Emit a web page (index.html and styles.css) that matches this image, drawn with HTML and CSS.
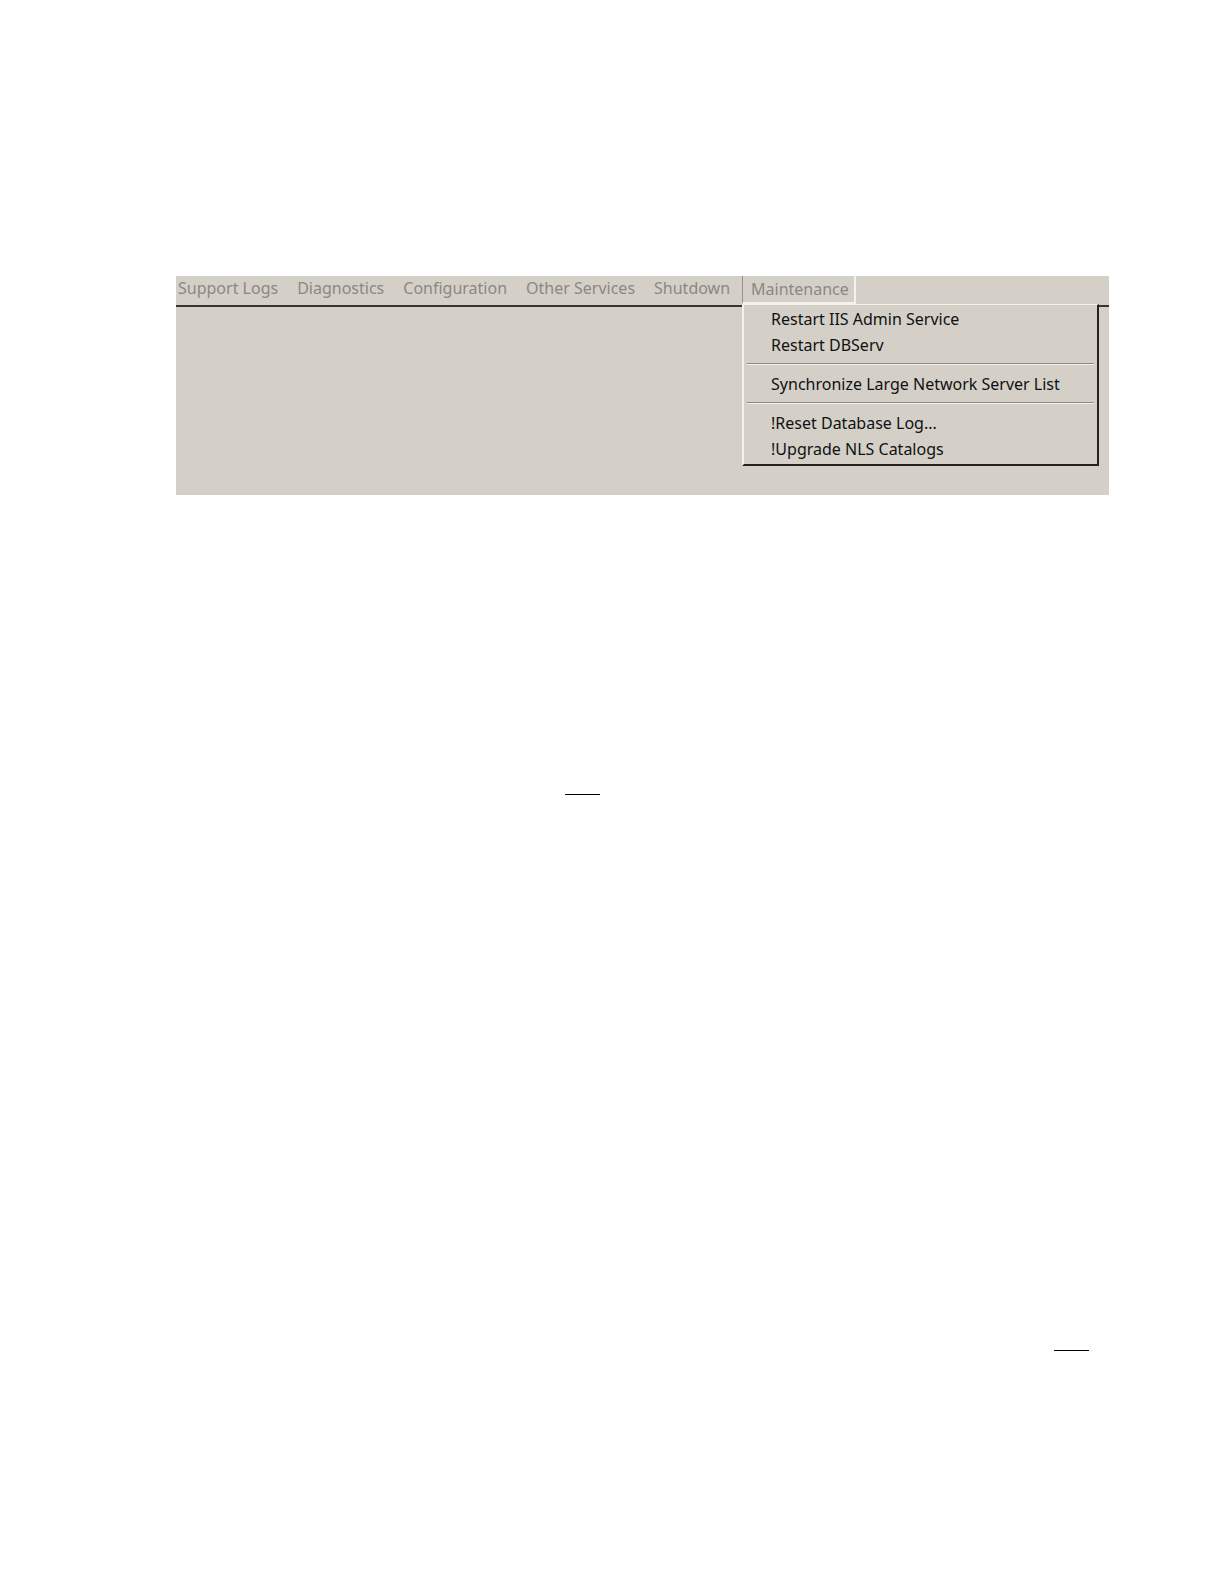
FILE: index.html
```html
<!DOCTYPE html>
<html lang="en">
<head>
    <meta charset="UTF-8">
    <meta name="viewport" content="width=device-width, initial-scale=1.0">
    <title>Maintenance Menu</title>
    <link rel="stylesheet" href="styles.css">
</head>
<body>
    <main class="page">
        <div class="window">
            <nav class="menubar">
                <button type="button">Support Logs</button>
                <button type="button">Diagnostics</button>
                <button type="button">Configuration</button>
                <button type="button">Other Services</button>
                <button type="button">Shutdown</button>
                <div class="menu-holder">
                    <button type="button" class="open" aria-expanded="true">Maintenance</button>
                    <div class="dropdown">
                        <button type="button">Restart IIS Admin Service</button>
                        <button type="button">Restart DBServ</button>
                        <hr>
                        <button type="button">Synchronize Large Network Server List</button>
                        <hr>
                        <button type="button">!Reset Database Log...</button>
                        <button type="button">!Upgrade NLS Catalogs</button>
                    </div>
                </div>
            </nav>
        </div>
        <hr class="rule rule-middle">
        <hr class="rule rule-end">
    </main>
</body>
</html>
```

FILE: styles.css
```css
body {
    margin: 0;
    background-color: #fff;
    font-family: "Noto Sans", "Open Sans", sans-serif;
    font-size: 16px;
}

.page {
    padding: 276px 113px 233px 176px;
}

.window {
    min-height: 219px;
    background-color: #d4d0c8;
}

button {
    border: none;
    background: none;
    font: inherit;
    text-align: left;
    white-space: nowrap;
    cursor: pointer;
}

.menubar {
    display: flex;
    height: 29px;
    border-bottom: 2px solid #383632;
}

.menubar > button {
    height: 24px;
    padding: 0 17px 0 2px;
    color: #8b8880;
    line-height: 24px;
}

/* Keeps the open list under its own title */
.menu-holder {
    position: relative;
    margin-left: -5px;
}

.menu-holder .open {
    display: block;
    box-sizing: border-box;
    height: 28px;
    padding: 0 5px 0 8px;
    border-left: 1px solid #96938c;
    border-right: 2px solid #f4f2ec;
    border-bottom: 2px solid #f4f2ec;
    color: #8b8880;
    line-height: 26px;
}

.dropdown {
    position: absolute;
    top: 28px;
    left: 0;
    display: flex;
    flex-direction: column;
    box-sizing: border-box;
    min-width: 357px;
    padding: 1px 3px 2px;
    border: 2px solid #24221f;
    border-top: 1px solid #f4f2ec;
    border-left-color: #f4f2ec;
    background-color: #d4d0c8;
}

.dropdown button {
    height: 26px;
    padding: 0 24px;
    color: #111;
    line-height: 26px;
}

.dropdown hr {
    width: 100%;
    height: 1px;
    margin: 5px 0 6px;
    border: none;
    border-bottom: 1px solid #f4f2ec;
    background-color: #8b8880;
}

.rule {
    width: 35px;
    height: 1px;
    border: none;
    background-color: #000;
}

.rule-middle {
    margin: 299px 0 0 389px;
}

.rule-end {
    margin: 555px 20px 0 auto;
}
```
